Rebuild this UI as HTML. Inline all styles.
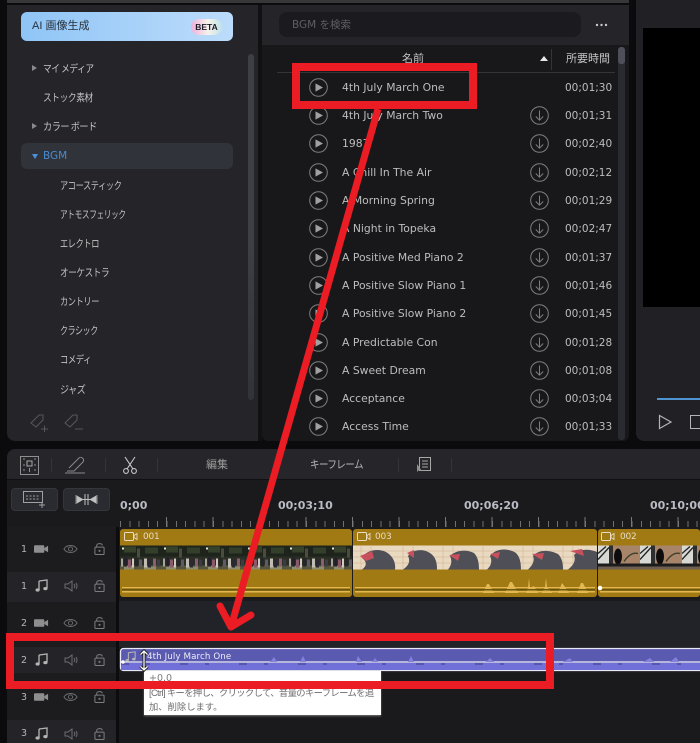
<!DOCTYPE html>
<html lang="ja"><head><meta charset="utf-8"><title>BGM</title>
<style>
html,body{margin:0;padding:0;background:#0b0b0d}
body{width:700px;height:743px;position:relative;overflow:hidden;font-family:"DejaVu Sans","Noto Sans CJK JP",sans-serif;color:#c6c6c6}
.a{position:absolute}
.t{position:absolute;white-space:nowrap;line-height:14px}
.l{font-family:"Noto Sans CJK JP",sans-serif;font-size:10.5px;color:#c4c4c4;letter-spacing:-.5px;transform-origin:0 50%}
.n{font-size:10.8px;left:342px;color:#bdbdbd}
.d{font-size:10.5px;left:565px;color:#bdbdbd}
.p{position:absolute;left:309px;width:19px;height:19px}
.g{position:absolute;left:530px;width:19px;height:19px}
.r{font-size:11px;font-weight:bold;color:#b9bcc4;top:499px}
.num{font-size:9.5px;left:21px;color:#b5b5b5}
.c{font-size:9px;color:#e6dcc0;top:530px;letter-spacing:-.2px}
svg{display:block;overflow:visible}
</style></head><body>
<svg width="0" height="0" style="position:absolute"><defs>
<symbol id="play" viewBox="0 0 19 19"><circle cx="9.5" cy="9.5" r="8.8" fill="none" stroke="#7e7e7e" stroke-width="1"/><path d="M6.5 5.4L14 9.5L6.5 13.6Z" fill="#a0a0a0"/></symbol>
<symbol id="dl" viewBox="0 0 19 19"><circle cx="9.5" cy="9.5" r="8.8" fill="none" stroke="#7e7e7e" stroke-width="1"/><path d="M9.5 4.5V14M5.8 10.5L9.5 14.2L13.2 10.5" fill="none" stroke="#7e7e7e" stroke-width="1"/></symbol>
<symbol id="cam" viewBox="0 0 16 10"><rect x="0" y="1" width="11" height="8" rx="1" fill="#8e8e8e"/><path d="M11 4L15 1.5V8.5L11 6Z" fill="#8e8e8e"/></symbol>
<symbol id="eye" viewBox="0 0 16 10"><path d="M1 5C4 0 12 0 15 5C12 10 4 10 1 5Z" fill="none" stroke="#6c6d71"/><circle cx="8" cy="5" r="2.2" fill="none" stroke="#6c6d71"/></symbol>
<symbol id="lock" viewBox="0 0 12 14"><rect x="1" y="5" width="10" height="8" rx="1" fill="none" stroke="#7c7d81" stroke-width="1.1"/><path d="M3 5V3C3 .5 9 .5 9 3" fill="none" stroke="#7c7d81" stroke-width="1.1"/><rect x="5" y="8" width="2" height="2" fill="#7c7d81"/></symbol>
<symbol id="note" viewBox="0 0 13 13"><path d="M4 2L12 1V9.5" fill="none" stroke="#b4b4b4" stroke-width="1.3"/><path d="M4 2V11" fill="none" stroke="#b4b4b4" stroke-width="1.3"/><ellipse cx="2.6" cy="11" rx="2.1" ry="1.6" fill="#b4b4b4"/><ellipse cx="10.4" cy="9.6" rx="2.1" ry="1.6" fill="#b4b4b4"/></symbol>
<symbol id="spk" viewBox="0 0 14 12"><path d="M1 4H4L8 1V11L4 8H1Z" fill="none" stroke="#6c6d71"/><path d="M10 4Q11.5 6 10 8M12 3Q14 6 12 9" fill="none" stroke="#6c6d71"/></symbol>
<symbol id="vc" viewBox="0 0 14 9"><rect x=".5" y=".5" width="9" height="8" rx="1" fill="none" stroke="#e6dcc0"/><path d="M10 3.5L13 1.5V7.5L10 5.5Z" fill="none" stroke="#e6dcc0" stroke-width=".9"/></symbol>
<pattern id="crowd" width="42" height="24" patternUnits="userSpaceOnUse" x="120" y="545.5">
<rect width="42" height="24" fill="#2a2e24"/>
<rect y="0" width="42" height="11" fill="#1e241b"/>
<rect x="4" y="1" width="12" height="6" fill="#36422c"/><rect x="25" y="2" width="13" height="6" fill="#333f2a"/><rect x="17" y="3" width="3" height="9" fill="#4a4c3c"/>
<rect x="2" y="2" width="2" height="2" fill="#e8e8d8"/>
<rect y="20" width="42" height="4" fill="#57553f"/><rect x="4" y="20" width="10" height="4" fill="#8e8a6c"/><rect x="24" y="21" width="12" height="3" fill="#8e8a6c"/>
<rect x="1" y="13" width="2" height="8" fill="#a8a49a"/><rect x="4" y="12" width="3" height="9" fill="#23222a"/><rect x="8" y="14" width="3" height="8" fill="#8a5a68"/><rect x="12" y="13" width="2" height="9" fill="#cfcbc2"/><rect x="15" y="12" width="3" height="9" fill="#25252c"/><rect x="19" y="14" width="3" height="7" fill="#5e5a68"/><rect x="24" y="13" width="3" height="9" fill="#c2bdb3"/><rect x="28" y="14" width="3" height="8" fill="#2a2932"/><rect x="33" y="13" width="3" height="8" fill="#8a6070"/><rect x="37" y="14" width="3" height="7" fill="#3e3a48"/>
</pattern>
<pattern id="wall" width="42" height="24" patternUnits="userSpaceOnUse" x="598" y="545.5">
<rect width="42" height="24" fill="#a88468"/>
<rect x="0" width="11" height="20" fill="#d8d8d4"/><path d="M0 14L11 2M0 8L8 1" stroke="#222" stroke-width="1.3"/>
<rect x="11" width="4" height="20" fill="#2e2e2e"/>
<ellipse cx="20" cy="11" rx="4" ry="8" fill="#0c0c0e"/>
<path d="M26 16Q33 6 40 8" stroke="#3c4030" stroke-width="1.4" fill="none"/>
<rect y="18" width="42" height="3" fill="#1c1c1c"/><rect y="21" width="42" height="3" fill="#6d6052"/>
</pattern>
</defs></svg>

<!-- top strips -->
<div class="a" style="left:7px;top:0;width:622px;height:3px;background:#37373a"></div>

<!-- left panel -->
<div class="a" style="left:7px;top:5px;width:251px;height:436px;background:#242429;border-radius:0 0 0 8px"></div>
<div class="a" style="left:21px;top:12px;width:212px;height:29px;border-radius:6px;background:linear-gradient(90deg,#8fc5f6,#bddcfb)"></div>
<div class="t" style="left:32px;top:19px;font-size:11px;color:#27313d;font-family:'Liberation Sans','Noto Sans CJK JP',sans-serif">AI 画像生成</div>
<div class="t" style="left:191px;top:19px;width:31px;height:16px;line-height:16px;border-radius:8px;text-align:center;font-size:8.5px;font-weight:bold;color:#1c1c28;font-family:'Liberation Sans',sans-serif;background:linear-gradient(90deg,#eeb0dc,#f6f2ea 55%,#bfe2e6)">BETA</div>
<div class="a" style="left:248px;top:54px;width:6px;height:346px;border-radius:3px;background:linear-gradient(#3d3f47 0,#3d3f47 55%,#31333a 100%)"></div>

<div class="a" style="left:32px;top:65px;border-left:5px solid #8a8a8a;border-top:3.5px solid transparent;border-bottom:3.5px solid transparent"></div>
<div class="t l" style="left:43px;top:62px;transform:scaleX(.83)">マイ メディア</div>
<div class="t l" style="left:43px;top:91px;transform:scaleX(.83)">ストック素材</div>
<div class="a" style="left:32px;top:123px;border-left:5px solid #8a8a8a;border-top:3.5px solid transparent;border-bottom:3.5px solid transparent"></div>
<div class="t l" style="left:43px;top:120px;transform:scaleX(.87)">カラー ボード</div>
<div class="a" style="left:21px;top:143px;width:212px;height:26px;border-radius:6px;background:#30333a"></div>
<div class="a" style="left:32px;top:154px;border-top:5px solid #4a90dc;border-left:3.5px solid transparent;border-right:3.5px solid transparent"></div>
<div class="t" style="left:43px;top:149px;font-size:10.5px;color:#4a8bd0">BGM</div>
<div class="t l" style="left:60px;top:179px;transform:scaleX(.78)">アコースティック</div>
<div class="t l" style="left:60px;top:208px;transform:scaleX(.73)">アトモスフェリック</div>
<div class="t l" style="left:60px;top:237px;transform:scaleX(.78)">エレクトロ</div>
<div class="t l" style="left:60px;top:266px;transform:scaleX(.82)">オーケストラ</div>
<div class="t l" style="left:60px;top:295px;transform:scaleX(.78)">カントリー</div>
<div class="t l" style="left:60px;top:324px;transform:scaleX(.76)">クラシック</div>
<div class="t l" style="left:60px;top:353px;transform:scaleX(.79)">コメディ</div>
<div class="t l" style="left:60px;top:383px;transform:scaleX(.86)">ジャズ</div>
<svg class="a" style="left:29px;top:412px" width="20" height="20" viewBox="0 0 20 20"><path d="M2 11L10 3L14 3L14 8L7 15Z" fill="none" stroke="#55565a" stroke-width="1.1"/><path d="M12 17H19M15.5 13.5V20" stroke="#55565a"/></svg>
<svg class="a" style="left:63px;top:412px" width="20" height="20" viewBox="0 0 20 20"><path d="M2 11L10 3L14 3L14 8L7 15Z" fill="none" stroke="#55565a" stroke-width="1.1"/><path d="M12 17H20" stroke="#55565a"/></svg>

<!-- collapse handle -->
<div class="a" style="left:258px;top:5px;width:4px;height:436px;background:#111113"></div>
<div class="a" style="left:262px;top:224px;width:12px;height:26px;background:#3a3c42;border-radius:0 3px 3px 0"></div>
<svg class="a" style="left:264px;top:232px" width="8" height="10"><path d="M6 1L2 5L6 9" fill="none" stroke="#4a90dc" stroke-width="1.4"/></svg>

<!-- middle panel -->
<div class="a" style="left:262px;top:5px;width:367px;height:40px;background:#242429"></div>
<div class="a" style="left:262px;top:45px;width:367px;height:396px;background:#18181a;border-radius:0 0 6px 6px"></div>
<div class="a" style="left:279px;top:12px;width:302px;height:25px;background:#1b1b1f;border-radius:8px"></div>
<div class="t" style="left:292px;top:18px;font-size:10.5px;color:#5e5f63;font-family:'DejaVu Sans','Noto Sans CJK JP',sans-serif">BGM を検索</div>
<svg class="a" style="left:595px;top:23px" width="13" height="4"><circle cx="2" cy="2" r="1.2" fill="#c8c8c8"/><circle cx="6.5" cy="2" r="1.2" fill="#c8c8c8"/><circle cx="11" cy="2" r="1.2" fill="#c8c8c8"/></svg>
<div class="t" style="left:402px;top:52px;font-size:11px;color:#c4c4c4">名前</div>
<div class="a" style="left:540px;top:56px;border-bottom:5px solid #e8e8e8;border-left:4px solid transparent;border-right:4px solid transparent"></div>
<div class="a" style="left:551px;top:49px;width:1px;height:21px;background:#333438"></div>
<div class="t" style="left:566px;top:52px;font-size:11px;color:#c4c4c4">所要時間</div>
<div class="a" style="left:277px;top:72px;width:338px;height:1px;background:#333438"></div>
<div class="a" style="left:618px;top:47px;width:7px;height:393px;border-radius:3px;background:#292b30"></div>
<div class="a" style="left:618px;top:47px;width:7px;height:17px;border-radius:3px;background:#4d5058"></div>

<div class="t n" style="top:81px">4th July March One</div><div class="t d" style="top:81px">00;01;30</div><svg class="p" style="top:78px"><use href="#play"/></svg>
<div class="t n" style="top:109px">4th July March Two</div><div class="t d" style="top:109px">00;01;31</div><svg class="p" style="top:106px"><use href="#play"/></svg><svg class="g" style="top:106px"><use href="#dl"/></svg>
<div class="t n" style="top:137px">1987</div><div class="t d" style="top:137px">00;02;40</div><svg class="p" style="top:134px"><use href="#play"/></svg><svg class="g" style="top:134px"><use href="#dl"/></svg>
<div class="t n" style="top:166px">A Chill In The Air</div><div class="t d" style="top:166px">00;02;12</div><svg class="p" style="top:163px"><use href="#play"/></svg><svg class="g" style="top:163px"><use href="#dl"/></svg>
<div class="t n" style="top:194px">A Morning Spring</div><div class="t d" style="top:194px">00;01;29</div><svg class="p" style="top:191px"><use href="#play"/></svg><svg class="g" style="top:191px"><use href="#dl"/></svg>
<div class="t n" style="top:222px">A Night in Topeka</div><div class="t d" style="top:222px">00;02;47</div><svg class="p" style="top:219px"><use href="#play"/></svg><svg class="g" style="top:219px"><use href="#dl"/></svg>
<div class="t n" style="top:251px">A Positive Med Piano 2</div><div class="t d" style="top:251px">00;01;37</div><svg class="p" style="top:248px"><use href="#play"/></svg><svg class="g" style="top:248px"><use href="#dl"/></svg>
<div class="t n" style="top:279px">A Positive Slow Piano 1</div><div class="t d" style="top:279px">00;01;46</div><svg class="p" style="top:276px"><use href="#play"/></svg><svg class="g" style="top:276px"><use href="#dl"/></svg>
<div class="t n" style="top:307px">A Positive Slow Piano 2</div><div class="t d" style="top:307px">00;01;45</div><svg class="p" style="top:304px"><use href="#play"/></svg><svg class="g" style="top:304px"><use href="#dl"/></svg>
<div class="t n" style="top:336px">A Predictable Con</div><div class="t d" style="top:336px">00;01;28</div><svg class="p" style="top:333px"><use href="#play"/></svg><svg class="g" style="top:333px"><use href="#dl"/></svg>
<div class="t n" style="top:364px">A Sweet Dream</div><div class="t d" style="top:364px">00;01;08</div><svg class="p" style="top:361px"><use href="#play"/></svg><svg class="g" style="top:361px"><use href="#dl"/></svg>
<div class="t n" style="top:392px">Acceptance</div><div class="t d" style="top:392px">00;03;04</div><svg class="p" style="top:389px"><use href="#play"/></svg><svg class="g" style="top:389px"><use href="#dl"/></svg>
<div class="t n" style="top:420px">Access Time</div><div class="t d" style="top:420px">00;01;33</div><svg class="p" style="top:417px"><use href="#play"/></svg><svg class="g" style="top:417px"><use href="#dl"/></svg>

<!-- preview panel -->
<div class="a" style="left:636px;top:0;width:64px;height:441px;background:#212125;border-radius:0 0 0 8px"></div>
<div class="a" style="left:643px;top:28px;width:57px;height:279px;background:#000"></div>
<div class="a" style="left:657px;top:398px;width:43px;height:2px;background:#4f93d0"></div>
<svg class="a" style="left:658px;top:414px" width="15" height="16"><path d="M1.5 1.5L13 8L1.5 14.5Z" fill="none" stroke="#b4b4b4" stroke-width="1.2"/></svg>
<div class="a" style="left:690px;top:415px;width:12px;height:12px;border:1px solid #b4b4b4"></div>

<!-- timeline panel -->
<div class="a" style="left:7px;top:449px;width:693px;height:294px;background:#1a1a1c;border-radius:8px 0 0 0"></div>
<div class="a" style="left:7px;top:449px;width:693px;height:31px;background:#25252a;border-radius:8px 0 0 0;border-bottom:1px solid #101012;box-sizing:border-box"></div>
<svg class="a" style="left:20px;top:456px" width="19" height="19" viewBox="0 0 19 19"><rect x=".5" y=".5" width="18" height="18" fill="none" stroke="#8f8f8f"/><rect x="7" y="5" width="5" height="5" fill="none" stroke="#a8a8a8"/><path d="M3 3H5M14 3H16M3 9H5M14 9H16M9.5 12V16M3 14H5M14 14H16" stroke="#8f8f8f"/></svg>
<svg class="a" style="left:64px;top:456px" width="23" height="18" viewBox="0 0 23 18"><path d="M5 12L15 2C17 0 21 3 19 6L10 15H3M1 17H21" fill="none" stroke="#8a8a8a" stroke-width="1"/></svg>
<svg class="a" style="left:123px;top:457px" width="14" height="17" viewBox="0 0 14 17"><path d="M2 0L10 12M12 0L4 12" stroke="#c8c8c8" stroke-width="1.1"/><circle cx="3" cy="14" r="2.4" fill="none" stroke="#c8c8c8" stroke-width="1.1"/><circle cx="11" cy="14" r="2.4" fill="none" stroke="#c8c8c8" stroke-width="1.1"/></svg>
<div class="a" style="left:51px;top:458px;width:1px;height:14px;background:#34353a"></div>
<div class="a" style="left:105px;top:458px;width:1px;height:14px;background:#34353a"></div>
<div class="a" style="left:157px;top:458px;width:1px;height:14px;background:#34353a"></div>
<div class="a" style="left:398px;top:458px;width:1px;height:14px;background:#34353a"></div>
<div class="a" style="left:451px;top:458px;width:1px;height:14px;background:#34353a"></div>
<div class="t" style="left:206px;top:458px;font-size:11px;color:#9c9c9c">編集</div>
<div class="t" style="left:310px;top:458px;font-size:11px;color:#b5b5b5;letter-spacing:-.7px;transform:scaleX(.87);transform-origin:0 50%">キーフレーム</div>
<svg class="a" style="left:416px;top:457px" width="16" height="16" viewBox="0 0 16 16"><rect x="3.5" y=".5" width="11" height="13" fill="none" stroke="#a8a8a8"/><path d="M6 4H12M6 7H12M6 10H12" stroke="#a8a8a8"/><path d="M1 7L1 15L3 13L6 14Z" fill="#8f8f8f"/></svg>

<div class="a" style="left:11px;top:488px;width:47px;height:23px;background:#2a2b30;border-radius:4px;border:1px solid #35363b;box-sizing:border-box"></div>
<svg class="a" style="left:23px;top:491px" width="24" height="17" viewBox="0 0 24 17"><rect x=".5" y=".5" width="19" height="11" fill="none" stroke="#a0a0a0"/><path d="M3 5H17M3 8H17" stroke="#a0a0a0" stroke-dasharray="2 1.5"/><path d="M16 14H22M19 11V17" stroke="#a0a0a0"/></svg>
<div class="a" style="left:63px;top:488px;width:47px;height:23px;background:#2a2b30;border-radius:4px;border:1px solid #35363b;box-sizing:border-box"></div>
<svg class="a" style="left:76px;top:494px" width="21" height="11" viewBox="0 0 21 11"><path d="M0 1V10M1 2L7 5.5L1 9Z M21 1V10M20 2L14 5.5L20 9Z" fill="#c0c0c0" stroke="#c0c0c0" stroke-width=".7"/><path d="M9 0V11M12 0V11M7 5.5H14" stroke="#c0c0c0"/></svg>

<!-- ruler -->
<div class="t r" style="left:120px">0;00</div><div class="t r" style="left:278px">00;03;10</div><div class="t r" style="left:464px">00;06;20</div><div class="t r" style="left:650px">00;10;00</div>
<div class="a" style="left:120px;top:521px;width:580px;height:6px;background:repeating-linear-gradient(90deg,#6f7074 0,#6f7074 1px,transparent 1px,transparent 9.3px)"></div>
<div class="a" style="left:166px;top:517px;width:534px;height:10px;background:repeating-linear-gradient(90deg,#77787c 0,#77787c 1px,transparent 1px,transparent 46.5px)"></div>

<!-- track headers -->
<div class="a" style="left:7px;top:527px;width:109px;height:216px;background:#1c1c1f"></div>
<div class="a" style="left:7px;top:572px;width:109px;height:30px;background:#242428"></div>
<div class="a" style="left:7px;top:647px;width:109px;height:26px;background:#242428"></div>
<div class="a" style="left:7px;top:720px;width:109px;height:23px;background:#242428"></div>
<div class="a" style="left:116px;top:527px;width:3px;height:216px;background:#0c0c0e"></div>
<div class="a" style="left:119px;top:601px;width:581px;height:46px;background:#212328"></div>
<div class="a" style="left:119px;top:647px;width:581px;height:26px;background:#1c1d21"></div>

<div class="t num" style="top:543px">1</div><svg class="a" style="left:34px;top:544px" width="15" height="10"><use href="#cam"/></svg><svg class="a" style="left:63px;top:544px" width="15" height="10"><use href="#eye"/></svg><svg class="a" style="left:94px;top:542px" width="11" height="14"><use href="#lock"/></svg>
<div class="t num" style="top:580px">1</div><svg class="a" style="left:35px;top:579px" width="13" height="13"><use href="#note"/></svg><svg class="a" style="left:64px;top:580px" width="14" height="12"><use href="#spk"/></svg><svg class="a" style="left:94px;top:579px" width="11" height="14"><use href="#lock"/></svg>
<div class="t num" style="top:617px">2</div><svg class="a" style="left:34px;top:618px" width="15" height="10"><use href="#cam"/></svg><svg class="a" style="left:63px;top:618px" width="15" height="10"><use href="#eye"/></svg><svg class="a" style="left:94px;top:616px" width="11" height="14"><use href="#lock"/></svg>
<div class="t num" style="top:654px">2</div><svg class="a" style="left:35px;top:653px" width="13" height="13"><use href="#note"/></svg><svg class="a" style="left:64px;top:654px" width="14" height="12"><use href="#spk"/></svg><svg class="a" style="left:94px;top:653px" width="11" height="14"><use href="#lock"/></svg>
<div class="t num" style="top:691px">3</div><svg class="a" style="left:34px;top:692px" width="15" height="10"><use href="#cam"/></svg><svg class="a" style="left:63px;top:692px" width="15" height="10"><use href="#eye"/></svg><svg class="a" style="left:94px;top:690px" width="11" height="14"><use href="#lock"/></svg>
<div class="t num" style="top:727px">3</div><svg class="a" style="left:35px;top:727px" width="13" height="13"><use href="#note"/></svg><svg class="a" style="left:64px;top:728px" width="14" height="12"><use href="#spk"/></svg><svg class="a" style="left:94px;top:727px" width="11" height="14"><use href="#lock"/></svg>

<!-- gold clips -->
<svg class="a" style="left:0;top:0" width="700" height="743">
<g fill="#a17a14"><rect x="120" y="529" width="232" height="68" rx="3"/><rect x="353" y="529" width="244" height="68" rx="3"/><rect x="598" y="529" width="102" height="68" rx="3"/></g>
<rect x="120" y="545.5" width="232" height="24" fill="url(#crowd)"/>
<rect x="353" y="545.5" width="244" height="24" fill="#e9d9c0"/>
<g stroke="#cfac8c" stroke-width=".5"><path d="M353 551H597M353 557H597M353 563H597"/><path d="M361 545V569M371 545V569M403 545V569M413 545V569M443 545V569M453 545V569M483 545V569M523 545V569M533 545V569M563 545V569M573 545V569"/></g>
<g fill="#4f4f58"><path d="M362 558C366 550 378 548 386 552C393 556 396 563 395 569.5H362C368 565 366 561 362 558Z"/><path d="M408 556C412 550 422 548 430 553C436 557 437 563 437 569.5H403C410 565 410 560 408 556Z"/><path d="M450 556C456 550 466 549 474 553C478 557 479 563 479 569.5H448C452 565 452 560 450 556Z"/><path d="M490 556C496 548 508 548 516 553C520 557 521 563 521 569.5H487C492 565 492 560 490 556Z"/><path d="M533 556C539 549 550 550 558 554C562 558 563 563 563 569.5H528C533 565 535 560 533 556Z"/><path d="M574 555C580 548 590 549 597 552V569.5H568C574 565 576 560 574 555Z"/></g>
<g fill="#c8505c"><path d="M360 556L372 551L374 558L366 561Z"/><path d="M407 553L414 550L414 558Z"/><path d="M449 555L460 554L458 561Z"/><path d="M490 554L500 552L498 559Z"/><path d="M532 554L544 553L542 560Z"/><path d="M570 551L582 549L584 556Z"/></g>
<rect x="598" y="545.5" width="102" height="24" fill="url(#wall)"/>
<use href="#vc" x="124" y="532" width="14" height="9"/><use href="#vc" x="357" y="532" width="14" height="9"/><use href="#vc" x="601" y="532" width="14" height="9"/>
<!-- waveform -->
<g fill="#e4b850"><rect x="122" y="587" width="228" height="1.2"/><rect x="355" y="587" width="240" height="1.2"/><rect x="600" y="587" width="100" height="1.2"/><rect x="122" y="591" width="228" height="1.5"/><rect x="355" y="591" width="240" height="1.5"/><rect x="600" y="591" width="100" height="1.5"/>
<path d="M483 593L487 584L489 584L494 593ZM505 593L510 582L512 582L518 593ZM526 593L528 588L529 578L530 588L534 586L538 593ZM542 593L545 587L546 578L547 587L552 593ZM558 593L562 583L565 587L569 593ZM577 593L581 583L583 583L588 593Z"/></g>
<rect x="122" y="589" width="228" height="1.5" fill="#6a5510"/><rect x="355" y="589" width="240" height="1.5" fill="#6a5510"/><rect x="600" y="589" width="100" height="1.5" fill="#6a5510"/>
<circle cx="600" cy="588" r="2.3" fill="#fff"/>
<!-- purple clip -->
<rect x="120.5" y="648.5" width="590" height="22" rx="3" fill="#5a5ab0" stroke="#e8e8f6" stroke-width="1.3"/>
<rect x="121" y="663" width="579" height="7" fill="#7070d8"/>
<path d="M121 662H700" stroke="#eeeef8" stroke-width="1.2"/>
<path d="M121 664H700" stroke="#2a2a66" stroke-width=".8" stroke-dasharray="8 17 4 30"/>
<g fill="#8282dc"><path d="M270 662L274 657L277 662ZM300 662L303 656L306 662ZM356 662L358 656L362 662ZM372 662L375 658L378 662ZM408 662L411 656L414 662ZM486 662L490 658L494 662ZM563 662L570 658L573 662ZM643 662L650 658L654 662ZM670 662L676 657L679 662Z"/></g>
<circle cx="123" cy="662" r="1.8" fill="#fff"/>
</svg>
<div class="t c" style="left:143px">001</div>
<div class="t c" style="left:375px">003</div>
<div class="t c" style="left:620px">002</div>
<svg class="a" style="left:125px;top:651px" width="11" height="11"><use href="#note"/></svg>
<div class="t" style="left:147px;top:650px;font-size:8.7px;color:#ececf8;letter-spacing:.1px">4th July March One</div>

<!-- tooltip -->
<div class="a" style="left:144px;top:671px;width:237px;height:44px;background:#fff;box-shadow:0 1px 2px #777"></div>
<div class="t" style="left:149px;top:672px;font-size:9.5px;color:#7c7c7c">+0.0</div>
<div class="t" style="left:149px;top:686px;font-size:9.3px;color:#6c6c6c;letter-spacing:-.62px;font-family:'Liberation Sans','Noto Sans CJK JP',sans-serif">[Ctrl] キーを押し、クリックして、音量のキーフレームを追</div>
<div class="t" style="left:149px;top:700px;font-size:9.3px;color:#6c6c6c;font-family:'Liberation Sans','Noto Sans CJK JP',sans-serif">加、削除します。</div>
<svg class="a" style="left:139px;top:650px" width="10" height="21" viewBox="0 0 10 21"><path d="M5 1V20M1.5 4.5L5 1L8.5 4.5M1.5 16.5L5 20L8.5 16.5" fill="none" stroke="#111" stroke-width="3"/><path d="M5 1V20M1.5 4.5L5 1L8.5 4.5M1.5 16.5L5 20L8.5 16.5" fill="none" stroke="#fff" stroke-width="1.3"/></svg>

<!-- red annotations -->
<svg class="a" style="left:0;top:0" width="700" height="743">
<path d="M378 109L231 627" stroke="#ec1c24" stroke-width="7" fill="none"/>
<path d="M220 606L231 627L251 615" stroke="#ec1c24" stroke-width="7" fill="none" stroke-linecap="round" stroke-linejoin="round"/>
<rect x="296" y="67" width="177" height="38" fill="none" stroke="#ec1c24" stroke-width="8"/>
<rect x="10" y="637" width="540" height="48" fill="none" stroke="#ec1c24" stroke-width="8"/>
</svg>
</body></html>
